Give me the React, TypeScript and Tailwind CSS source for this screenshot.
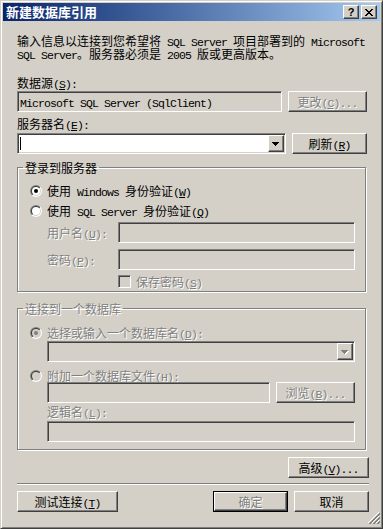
import { useId } from "react";

const mono = "font-['Liberation_Mono',monospace] text-[11.5px] tracking-[-0.9px] leading-[8px]";
const dim = "text-[#808080] [text-shadow:1px_1px_0_#ffffff]";
const sunken =
  "border border-t-[#808080] border-l-[#808080] border-r-white border-b-white shadow-[inset_1px_1px_0_#404040,inset_-1px_-1px_0_#d4d0c8]";
const raised =
  "border border-t-white border-l-white border-r-[#404040] border-b-[#404040] shadow-[inset_-1px_-1px_0_#808080] bg-[#d4d0c8]";

// ascii runs go to a narrow mono font, like the old SimSun latin
function Mix({ s }: { s: string }) {
  return (
    <>
      {s
        .split(/([ -~]+)/)
        .filter(Boolean)
        .map((p, i) =>
          /^[ -~]+$/.test(p) ? (
            <span key={i} className={mono}>
              {p}
            </span>
          ) : (
            <span key={i}>{p}</span>
          )
        )}
    </>
  );
}

function Lbl({ s, k, t = "" }: { s: string; k: string; t?: string }) {
  return (
    <span>
      <Mix s={s} />
      <span className={mono}>
        (<u>{k}</u>){t}
      </span>
    </span>
  );
}

function Btn({ children, w, off }: { children: React.ReactNode; w: string; off?: boolean }) {
  return (
    <div className={`${raised} ${w} h-[21px] shrink-0 flex items-center justify-center ${off ? dim : ""}`}>
      <span>{children}</span>
    </div>
  );
}

function Radio({ on, off }: { on?: boolean; off?: boolean }) {
  const id = useId().replace(/[^a-zA-Z0-9]/g, "");
  return (
    <svg width="12" height="12" viewBox="0 0 12 12" className="shrink-0">
      <defs>
        <linearGradient id={id + "a"} x1="0" y1="0" x2="1" y2="1">
          <stop offset="0.5" stopColor="#808080" />
          <stop offset="0.5" stopColor="#ffffff" />
        </linearGradient>
        <linearGradient id={id + "b"} x1="0" y1="0" x2="1" y2="1">
          <stop offset="0.5" stopColor="#404040" />
          <stop offset="0.5" stopColor="#d4d0c8" />
        </linearGradient>
      </defs>
      <circle cx="6" cy="6" r="6" fill={`url(#${id}a)`} />
      <circle cx="6" cy="6" r="5" fill={`url(#${id}b)`} />
      <circle cx="6" cy="6" r="4" fill={off ? "#d4d0c8" : "#ffffff"} />
      {on && <circle cx="6" cy="6" r="2" fill={off ? "#808080" : "#000000"} />}
    </svg>
  );
}

function Arrow({ off }: { off?: boolean }) {
  return (
    <svg width="8" height="5" viewBox="0 0 8 5">
      {off && <path d="M1 1h7v1H1zM2 2h5v1H2zM3 3h3v1H3zM4 4h1v1H4z" fill="#ffffff" />}
      <path d="M0 0h7v1H0zM1 1h5v1H1zM2 2h3v1H2zM3 3h1v1H3z" fill={off ? "#808080" : "#000000"} />
    </svg>
  );
}

function Combo({ off, w }: { off?: boolean; w: string }) {
  return (
    <div
      className={`${sunken} ${w} h-[21px] flex items-center justify-between pr-[1px] ${
        off ? "bg-[#d4d0c8]" : "bg-white"
      }`}
    >
      {off ? <span /> : <span className="ml-[2px] w-px h-[13px] bg-black" />}
      <div className={`${raised} w-[16px] h-[17px] flex items-center justify-center pt-px`}>
        <Arrow off={off} />
      </div>
    </div>
  );
}

function Box({ w, children }: { w: string; children?: React.ReactNode }) {
  return (
    <div className={`${sunken} ${w} h-[21px] shrink-0 bg-[#d4d0c8] flex items-center pl-[2px]`}>
      <span>{children}</span>
    </div>
  );
}

function Group({ title, off, children }: { title: string; off?: boolean; children: React.ReactNode }) {
  return (
    <fieldset className="w-[349px] border border-[#808080] shadow-[inset_1px_1px_0_#ffffff,1px_1px_0_#ffffff] p-0 m-0">
      <legend className={`ml-[5px] px-[2px] leading-[13px] ${off ? dim : ""}`}>{title}</legend>
      {children}
    </fieldset>
  );
}

export default function App() {
  return (
    <div className="w-[383px] h-[529px] bg-[#d4d0c8] border border-t-[#d4d0c8] border-l-[#d4d0c8] border-r-[#404040] border-b-[#404040] shadow-[inset_1px_1px_0_#ffffff,inset_-1px_-1px_0_#808080] p-[2px] flex flex-col text-[12px] leading-[13px] text-black font-['Noto_Sans_CJK_SC',sans-serif] select-none">
      {/* caption */}
      <div className="h-[18px] shrink-0 flex items-center bg-linear-to-r from-[#0a246a] to-[#a6caf0] pl-[3px] pr-[3px]">
        <span className="flex-1 text-white font-bold text-[13px] leading-[18px]">新建数据库引用</span>
        <div className="flex gap-[2px]">
          <div className={`${raised} w-[16px] h-[14px] flex items-center justify-center font-['Liberation_Sans',sans-serif] font-bold text-[11px] leading-[12px]`}>
            ?
          </div>
          <div className={`${raised} w-[16px] h-[14px] flex items-center justify-center`}>
            <svg width="8" height="7" viewBox="0 0 8 7">
              <path d="M0 0h2v1H0zM6 0h2v1H6zM1 1h2v1H1zM5 1h2v1H5zM2 2h4v1H2zM3 3h2v1H3zM2 4h4v1H2zM1 5h2v1H1zM5 5h2v1H5zM0 6h2v1H0zM6 6h2v1H6z" fill="#000" />
            </svg>
          </div>
        </div>
      </div>

      {/* client */}
      <div className="relative flex-1 flex flex-col pl-[14px] pr-[11px]">
        <p className="mt-[13px]">
          <Mix s="输入信息以连接到您希望将 SQL Server 项目部署到的 Microsoft" />
          <br />
          <Mix s="SQL Server。服务器必须是 2005 版或更高版本。" />
        </p>

        <div className="mt-[16px]">
          <Lbl s="数据源" k="S" t=":" />
        </div>
        <div className="mt-[2px] flex gap-[6px]">
          <Box w="w-[265px]">
            <Mix s="Microsoft SQL Server (SqlClient)" />
          </Box>
          <Btn w="w-[79px]" off>
            <Lbl s="更改" k="C" t="..." />
          </Btn>
        </div>

        <div className="mt-[5px]">
          <Lbl s="服务器名" k="E" t=":" />
        </div>
        <div className="mt-[3px] flex gap-[6px]">
          <Combo w="w-[269px]" />
          <Btn w="w-[75px]">
            <Lbl s="刷新" k="R" />
          </Btn>
        </div>

        {/* login */}
        <div className="mt-[7px]">
          <Group title="登录到服务器">
            <div className="flex flex-col pl-[12px] pr-[10px] pb-[3px]">
              <div className="mt-[10px] h-[13px] flex items-center gap-[5px]">
                <Radio on />
                <Lbl s="使用 Windows 身份验证" k="W" />
              </div>
              <div className="mt-[7px] h-[13px] flex items-center gap-[5px]">
                <Radio />
                <Lbl s="使用 SQL Server 身份验证" k="Q" />
              </div>
              <div className="mt-[5px] h-[21px] flex items-center pl-[17px]">
                <span className={`w-[71px] ${dim}`}>
                  <Lbl s="用户名" k="U" t=":" />
                </span>
                <Box w="w-[237px]" />
              </div>
              <div className="mt-[6px] h-[21px] flex items-center pl-[17px]">
                <span className={`w-[71px] ${dim}`}>
                  <Lbl s="密码" k="P" t=":" />
                </span>
                <Box w="w-[237px]" />
              </div>
              <div className="mt-[5px] h-[13px] flex items-center gap-[5px] pl-[88px]">
                <div className={`${sunken} w-[13px] h-[13px] bg-[#d4d0c8]`} />
                <span className={dim}>
                  <Lbl s="保存密码" k="S" />
                </span>
              </div>
            </div>
          </Group>
        </div>

        {/* database */}
        <div className="mt-[10px]">
          <Group title="连接到一个数据库" off>
            <div className="flex flex-col pl-[12px] pr-[10px] pb-[7px]">
              <div className="mt-[11px] h-[13px] flex items-center gap-[5px]">
                <Radio on off />
                <span className={dim}>
                  <Lbl s="选择或输入一个数据库名" k="D" t=":" />
                </span>
              </div>
              <div className="mt-[2px] pl-[17px]">
                <Combo w="w-[308px]" off />
              </div>
              <div className="mt-[7px] h-[13px] flex items-center gap-[5px]">
                <Radio off />
                <span className={dim}>
                  <Lbl s="附加一个数据库文件" k="H" t=":" />
                </span>
              </div>
              <div className="mt-0 pl-[17px] flex gap-[6px]">
                <Box w="w-[223px]" />
                <Btn w="w-[79px]" off>
                  <Lbl s="浏览" k="B" t="..." />
                </Btn>
              </div>
              <div className={`mt-[2px] pl-[17px] ${dim}`}>
                <Lbl s="逻辑名" k="L" t=":" />
              </div>
              <div className="mt-[3px] pl-[17px]">
                <Box w="w-[308px]" />
              </div>
            </div>
          </Group>
        </div>

        <div className="mt-[7px] flex justify-end">
          <Btn w="w-[81px]">
            <Lbl s="高级" k="V" t="..." />
          </Btn>
        </div>

        <div className="mt-[5px] h-[2px] border-t border-t-[#808080] border-b border-b-white" />

        <div className="mt-[6px] flex">
          <Btn w="w-[101px]">
            <Lbl s="测试连接" k="T" />
          </Btn>
          <div className="flex-1" />
          <div className="border border-black w-[75px] h-[21px] flex">
            <div className={`${raised} flex-1 flex items-center justify-center ${dim}`}>确定</div>
          </div>
          <div className="w-[6px]" />
          <Btn w="w-[75px]">取消</Btn>
        </div>

        {/* size grip */}
        <svg width="12" height="12" viewBox="0 0 12 12" className="absolute right-0 bottom-[2px]" shapeRendering="crispEdges">
          <path d="M11 0L0 11M11 4L4 11M11 8L8 11" stroke="#ffffff" />
          <path d="M12 1L1 12M12 2L2 12M12 5L5 12M12 6L6 12M12 9L9 12M12 10L10 12" stroke="#808080" />
        </svg>
      </div>
    </div>
  );
}
